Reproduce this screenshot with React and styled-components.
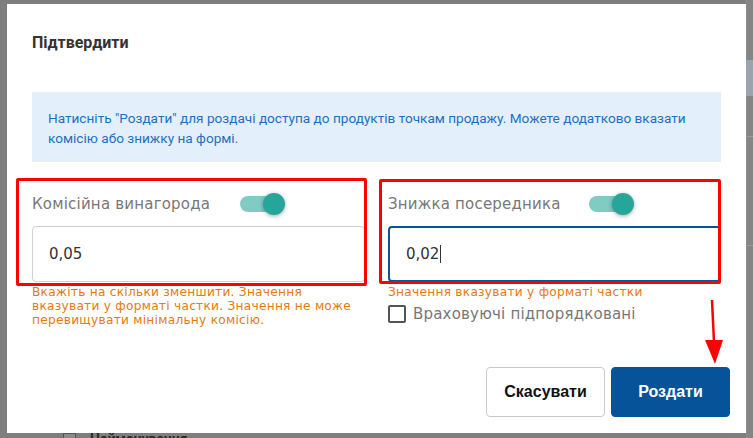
import React from "react"
import styled, { createGlobalStyle } from "styled-components"

const Global = createGlobalStyle`
  html, body {
    margin: 0;
    padding: 0;
    background: #7e7e7e;
    overflow: hidden;
  }
  * { box-sizing: border-box; }
`

const Backdrop = styled.div`
  position: relative;
  width: 753px;
  height: 438px;
  background: #7e7e7e;
  padding: 4px 7px 0 7px;
`

const PageEdge = styled.div`
  position: absolute;
  right: 0;
  top: 0;
  width: 7px;
  height: 438px;
  background: #858585;
  border-left: 1px solid #8c8c8c;
`

const EdgeBand = styled.div`
  position: absolute;
  right: 0;
  top: ${p => p.top}px;
  width: 7px;
  height: ${p => p.h}px;
  background: ${p => p.bg};
`

const BehindRow = styled.div`
  position: absolute;
  left: 63px;
  top: 431px;
  display: flex;
  align-items: center;
  gap: 14px;
  font-family: Roboto, sans-serif;
  font-weight: 700;
  font-size: 14px;
  color: #2a2a2a;
`

const BehindBox = styled.span`
  width: 13px;
  height: 13px;
  border: 1px solid #555;
  background: #8a8a8a;
`

const Modal = styled.div`
  position: relative;
  width: 739px;
  height: 429px;
  background: #fff;
  padding: 0 25px 0 25px;
  display: flex;
  flex-direction: column;
`

const Title = styled.h2`
  margin: 0;
  padding: 29px 0 0 0;
  height: 88px;
  font-family: Roboto, sans-serif;
  font-weight: 700;
  font-size: 16px;
  color: #333;
`

const Info = styled.div`
  background: #e3f0fb;
  padding: 16px 16px 14px 16px;
  font-family: Roboto, sans-serif;
  font-size: 13.6px;
  line-height: 20px;
  color: #1f6fc1;
  height: 70px;
`

const Columns = styled.div`
  display: grid;
  grid-template-columns: 333px 333px;
  column-gap: 23px;
  margin-top: 28px;
`

const Field = styled.div`
  display: flex;
  flex-direction: column;
  font-family: "DejaVu Sans", sans-serif;
`

const LabelRow = styled.div`
  display: flex;
  align-items: center;
  height: 28px;
  gap: ${p => p.gap}px;
`

const Label = styled.span`
  font-size: 15px;
  color: #777;
  letter-spacing: 0.2px;
`

const Track = styled.span`
  position: relative;
  width: 34px;
  height: 16px;
  border-radius: 8px;
  background: #80cbc4;
  display: inline-block;
`

const Knob = styled.span`
  position: absolute;
  right: -11px;
  top: -3px;
  width: 22px;
  height: 22px;
  border-radius: 50%;
  background: #26a69a;
  box-shadow: 0 1px 4px rgba(0, 0, 0, 0.35);
`

const Input = styled.div`
  margin-top: 8px;
  height: 56px;
  border: ${p => (p.focused ? "2px solid #0b5394" : "1px solid #cfcfd6")};
  border-radius: 4px;
  display: flex;
  align-items: center;
  padding-left: 16px;
  font-size: 15px;
  color: #333;
`

const Caret = styled.span`
  display: inline-block;
  width: 1px;
  height: 18px;
  background: #333;
  margin-left: 1px;
`

const Helper = styled.div`
  margin-top: 3px;
  font-size: 12.2px;
  line-height: 14px;
  color: #e57a13;
  letter-spacing: 0.25px;
`

const CheckRow = styled.label`
  display: flex;
  align-items: center;
  gap: 7px;
  margin-top: 6px;
`

const Box = styled.span`
  width: 18px;
  height: 18px;
  border: 2px solid #555;
  border-radius: 2px;
`

const Footer = styled.div`
  display: flex;
  justify-content: flex-end;
  gap: 6px;
  margin-top: auto;
  margin-bottom: 16px;
  margin-right: -9px;
`

const Button = styled.button`
  width: 119px;
  height: 50px;
  border-radius: 4px;
  font-family: "Liberation Sans", Arial, sans-serif;
  font-weight: 700;
  font-size: 16px;
  cursor: pointer;
  background: ${p => (p.primary ? "#06539a" : "#fff")};
  color: ${p => (p.primary ? "#fff" : "#111")};
  border: ${p => (p.primary ? "1px solid #06539a" : "1px solid #c9c9d0")};
`

const Mark = styled.div`
  position: absolute;
  left: ${p => p.left}px;
  top: ${p => p.top}px;
  width: ${p => p.w}px;
  height: ${p => p.h}px;
  border: 3px solid #ff0000;
  border-radius: 2px;
  pointer-events: none;
`

const Arrow = styled.svg`
  position: absolute;
  left: 692px;
  top: 296px;
  pointer-events: none;
`

export default function App() {
  return (
    <Backdrop>
      <Global />
      <PageEdge />
      <EdgeBand top={60} h={36} bg="#9aa4ad" />
      <EdgeBand top={136} h={1} bg="#999" />
      <EdgeBand top={245} h={1} bg="#999" />
      <BehindRow>
        <BehindBox />
        Найменування
      </BehindRow>
      <Modal>
        <Title>Підтвердити</Title>
        <Info>
          Натисніть "Роздати" для роздачі доступа до продуктів точкам продажу. Можете додатково вказати
          комісію або знижку на формі.
        </Info>
        <Columns>
          <Field>
            <LabelRow gap={30}>
              <Label>Комісійна винагорода</Label>
              <Track><Knob /></Track>
            </LabelRow>
            <Input>0,05</Input>
            <Helper>
              Вкажіть на скільки зменшити. Значення вказувати у форматі частки. Значення не може
              перевищувати мінімальну комісію.
            </Helper>
          </Field>
          <Field>
            <LabelRow gap={28}>
              <Label>Знижка посередника</Label>
              <Track><Knob /></Track>
            </LabelRow>
            <Input focused>0,02<Caret /></Input>
            <Helper>Значення вказувати у форматі частки</Helper>
            <CheckRow>
              <Box />
              <Label>Враховуючі підпорядковані</Label>
            </CheckRow>
          </Field>
        </Columns>
        <Footer>
          <Button>Скасувати</Button>
          <Button primary>Роздати</Button>
        </Footer>
        <Mark left={9} top={174} w={351} h={108} />
        <Mark left={372} top={175} w={342} h={105} />
        <Arrow width="30" height="70" viewBox="0 0 30 70">
          <line x1="13" y1="0" x2="15" y2="42" stroke="#ff0000" strokeWidth="2.5" />
          <polygon points="6,40 24,40 16,64" fill="#ff0000" />
        </Arrow>
      </Modal>
    </Backdrop>
  )
}
